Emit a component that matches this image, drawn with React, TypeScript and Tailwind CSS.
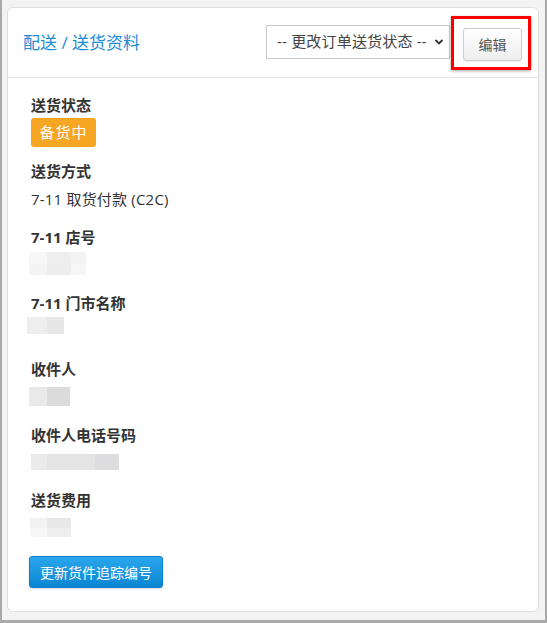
import React from "react";

const font = { fontFamily: '"Open Sans", "Noto Sans CJK SC", sans-serif' };

function Blur({ cells, className }: { cells: { w: number; top: string; bottom?: string }[]; className: string }) {
  return (
    <div className={"flex " + className}>
      {cells.map((c, i) => (
        <div key={i} className="flex flex-col" style={{ width: c.w }}>
          <div className="flex-1" style={{ background: c.top }} />
          {c.bottom ? <div className="flex-1" style={{ background: c.bottom }} /> : null}
        </div>
      ))}
    </div>
  );
}

function Label({ children, className = "" }: { children: React.ReactNode; className?: string }) {
  return <div className={"h-5 leading-5 text-[15px] font-bold text-[#333333] " + className}>{children}</div>;
}

export default function App() {
  return (
    <div
      className="w-[547px] h-[623px] bg-[#f3f3f3] border-l-2 border-r-[2px] border-b-[3px] border-[#a9a9a9] box-border flex flex-col pl-[5px] pt-[7px] pr-[6px] pb-[8px]"
      style={font}
    >
      <div className="flex-1 bg-white border border-[#dedede] rounded-[6px] flex flex-col">
        <div className="h-[70px] border-b border-[#e5e5e5] flex items-center justify-between pl-[15px] pr-[16px]">
          <div className="text-[17px] text-[#1b8dd6] mt-[1px]">配送 / 送货资料</div>
          <div className="flex items-start">
            <div className="w-[184px] h-[34px] border border-[#cccccc] bg-white flex items-center justify-between pl-[10px] pr-[5px] text-[15px] text-[#444444]">
              <span className="tracking-[0.2px]">-- 更改订单送货状态 --</span>
              <svg width="10" height="8" viewBox="0 0 10 8">
                <path d="M1.5 2 L5 5.5 L8.5 2" fill="none" stroke="#333" strokeWidth="1.8" />
              </svg>
            </div>
            <div className="relative ml-[13px] mt-[3px]">
              <div className="w-[59px] h-[33px] border border-[#cccccc] rounded-[3px] bg-gradient-to-b from-[#ffffff] to-[#eeeeee] flex items-center justify-center text-[14px] text-[#555555] shadow-[0_1px_1px_rgba(0,0,0,0.06)]">
                编辑
              </div>
              <div className="absolute left-[-12px] top-[-12px] right-[-9px] bottom-[-9px] border-[3px] border-[#ff0000] shadow-[0_1px_3px_rgba(0,0,0,0.35)] pointer-events-none" />
            </div>
          </div>
        </div>

        <div className="flex flex-col items-start pl-[23px] pt-[17px]">
          <Label>送货状态</Label>
          <div className="mt-[3px] h-[29px] w-[65px] rounded-[3px] bg-[#f6a623] text-white text-[15px] tracking-[1px] flex items-center justify-center">
            备货中
          </div>

          <Label className="mt-[14px]">送货方式</Label>
          <div className="mt-[7px] h-[22px] leading-[22px] text-[15px] text-[#333333] tracking-[0.2px]">7-11 取货付款 (C2C)</div>

          <Label className="mt-[17px]">7-11 店号</Label>
          <Blur
            className="mt-[5px] h-[23px] ml-[-2px]"
            cells={[
              { w: 18, top: "#f7f7f7", bottom: "#f4f4f4" },
              { w: 24, top: "#eeeeee", bottom: "#ededed" },
              { w: 15, top: "#f3f3f3", bottom: "#f6f6f6" },
            ]}
          />

          <Label className="mt-[18px]">7-11 门市名称</Label>
          <Blur
            className="mt-[4px] h-[17px] ml-[-4px]"
            cells={[
              { w: 20, top: "#eeeeee" },
              { w: 17, top: "#e7e7e8" },
            ]}
          />

          <Label className="mt-[25px]">收件人</Label>
          <Blur
            className="mt-[8px] h-[19px] ml-[-2px]"
            cells={[
              { w: 18, top: "#e9e9ea" },
              { w: 23, top: "#dbdbdc" },
            ]}
          />

          <Label className="mt-[19px]">收件人电话号码</Label>
          <Blur
            className="mt-[9px] h-[16px]"
            cells={[
              { w: 16, top: "#ebebec" },
              { w: 48, top: "#e4e4e5" },
              { w: 24, top: "#dddddf" },
            ]}
          />

          <Label className="mt-[20px]">送货费用</Label>
          <Blur
            className="mt-[8px] h-[19px] ml-[-1px]"
            cells={[
              { w: 17, top: "#f2f2f2", bottom: "#f7f7f7" },
              { w: 24, top: "#e8e8e9", bottom: "#eeeeee" },
            ]}
          />

          <button className="mt-[19px] ml-[-2px] h-[32px] w-[134px] rounded-[3px] border border-[#0c7fc8] bg-gradient-to-b from-[#29a6ec] to-[#0a86d2] text-white text-[14px] flex items-center justify-center shadow-[0_1px_2px_rgba(0,0,0,0.15)]">
            更新货件追踪编号
          </button>
        </div>
      </div>
    </div>
  );
}
